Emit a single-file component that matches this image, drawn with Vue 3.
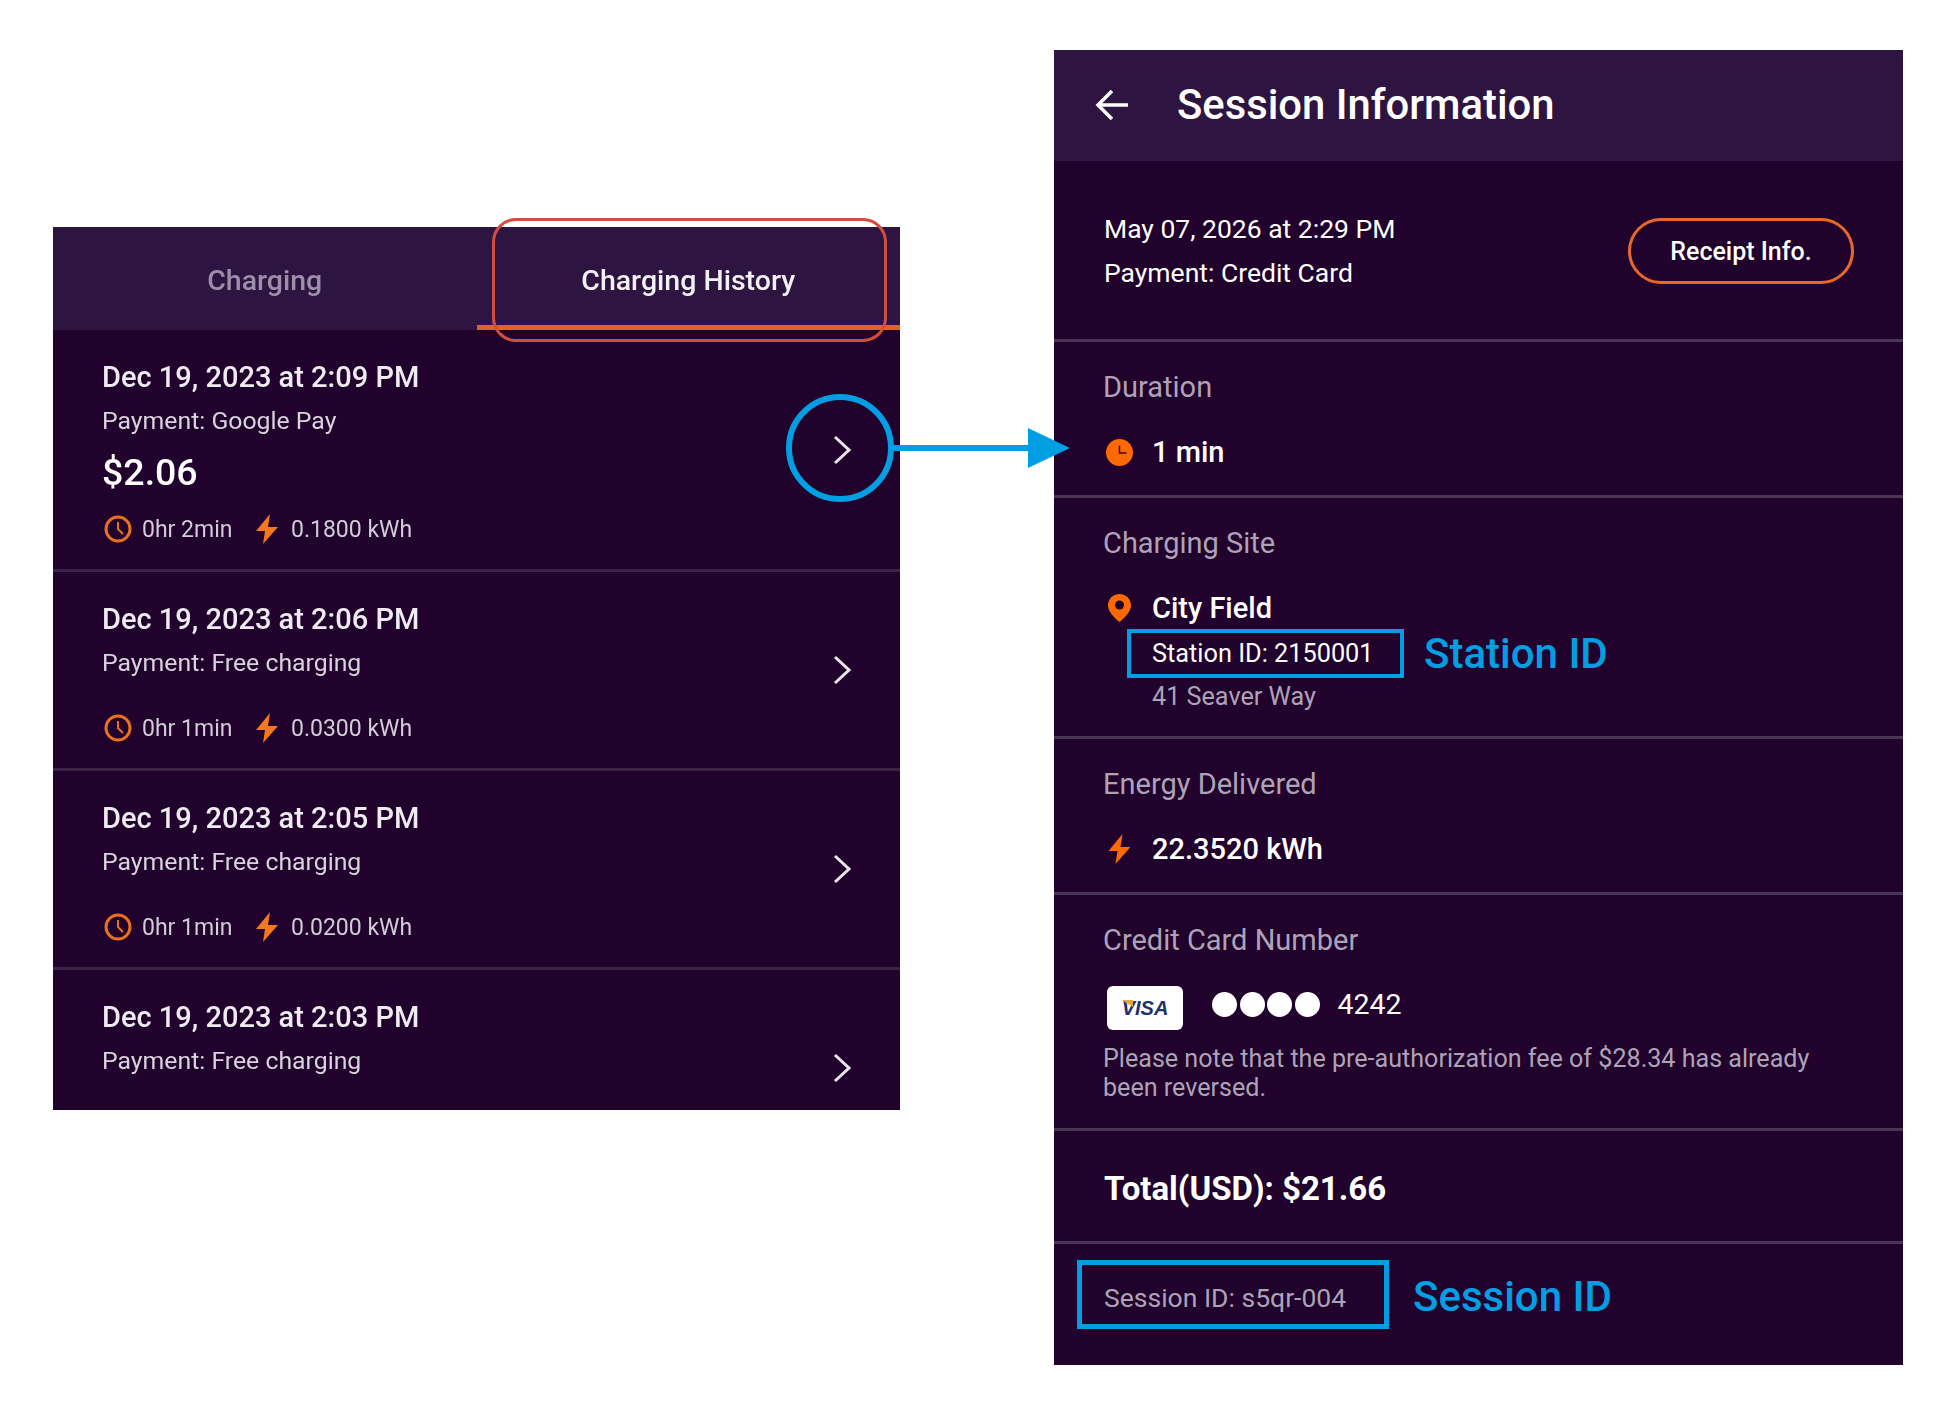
<template>
  <div class="page">
    <!-- history list -->
    <section class="history">
      <div class="tabs">
        <div class="tab">Charging</div>
        <div class="tab active">Charging History</div>
      </div>
      <div class="rows">
        <div v-for="item in sessions" :key="item.date" class="row">
          <div class="row-body">
            <div class="row-date">{{ item.date }}</div>
            <div class="row-pay">Payment: {{ item.payment }}</div>
            <div v-if="item.price" class="row-price">{{ item.price }}</div>
            <div v-if="item.time" class="row-meta">
              <svg class="meta-clock" viewBox="0 0 28 28" fill="none" stroke="#e8701f" stroke-width="3">
                <circle cx="14" cy="14" r="12" />
                <path d="M14 7v7l5 5" stroke-width="2" />
              </svg>
              <span class="meta-time">{{ item.time }}</span>
              <svg class="meta-bolt" viewBox="0 0 22 30"><path :d="boltPath" fill="#f5781a" /></svg>
              <span>{{ item.energy }}</span>
            </div>
          </div>
          <svg class="chevron" viewBox="0 0 19 30" fill="none" stroke="#ebe7ee" stroke-width="3">
            <path d="M2 2l14 13L2 28" />
          </svg>
        </div>
      </div>
      <div class="red-mark"></div>
      <div class="blue-ring"></div>
    </section>

    <!-- session details -->
    <section class="detail">
      <header class="detail-head">
        <svg class="back" viewBox="0 0 33 32" fill="none" stroke="#fff" stroke-width="3.5">
          <path d="M33 16H4M17 2L3 16l14 14" />
        </svg>
        <h1>Session Information</h1>
      </header>

      <div class="block top">
        <div>
          <div class="line">May 07, 2026 at 2:29 PM</div>
          <div class="line second">Payment: Credit Card</div>
        </div>
        <button class="receipt">Receipt Info.</button>
      </div>

      <div class="block">
        <div class="label">Duration</div>
        <div class="value">
          <span class="slot">
            <svg width="27" height="27" viewBox="0 0 27 27">
              <circle cx="13.5" cy="13.5" r="13.5" fill="#ff6a00" />
              <path d="M13.5 6.5v7.5h7" fill="none" stroke="#3a0a20" stroke-width="1.5" />
            </svg>
          </span>
          1 min
        </div>
      </div>

      <div class="block site-block">
        <div class="label">Charging Site</div>
        <div class="value">
          <span class="slot">
            <svg width="23" height="28" viewBox="0 0 23 28">
              <path d="M11.5 0C5 0 0 5 0 11.5 0 18 7 24 11.5 28 16 24 23 18 23 11.5 23 5 18 0 11.5 0z" fill="#ff6a00" />
              <circle cx="11.5" cy="11" r="4.5" fill="#20022d" />
            </svg>
          </span>
          City Field
        </div>
        <div class="station">
          <div class="station-box">Station ID: 2150001</div>
          <div class="callout">Station ID</div>
        </div>
        <div class="address">41 Seaver Way</div>
      </div>

      <div class="block">
        <div class="label">Energy Delivered</div>
        <div class="value">
          <span class="slot">
            <svg width="23" height="30" viewBox="0 0 22 30"><path :d="boltPath" fill="#ff6a00" /></svg>
          </span>
          22.3520 kWh
        </div>
      </div>

      <div class="block card-block">
        <div class="label">Credit Card Number</div>
        <div class="card-row">
          <div class="visa"><span>VISA</span></div>
          <div class="dots"><i v-for="n in 4" :key="n"></i></div>
          <div class="last4">4242</div>
        </div>
        <p class="note">Please note that the pre-authorization fee of $28.34 has already been reversed.</p>
      </div>

      <div class="block total">Total(USD): $21.66</div>

      <div class="session-row">
        <div class="session-box">Session ID: s5qr-004</div>
        <div class="callout">Session ID</div>
      </div>
    </section>

    <svg class="arrow" width="178" height="40" viewBox="0 0 178 40">
      <path d="M0 20h140" stroke="#009fe3" stroke-width="6" />
      <path d="M136 0l42 20-42 20z" fill="#009fe3" />
    </svg>
  </div>
</template>

<script setup>
const boltPath = 'M14 0L0 17h9L7 30 22 13h-10z'

const sessions = [
  { date: 'Dec 19, 2023 at 2:09 PM', payment: 'Google Pay', price: '$2.06', time: '0hr 2min', energy: '0.1800 kWh' },
  { date: 'Dec 19, 2023 at 2:06 PM', payment: 'Free charging', time: '0hr 1min', energy: '0.0300 kWh' },
  { date: 'Dec 19, 2023 at 2:05 PM', payment: 'Free charging', time: '0hr 1min', energy: '0.0200 kWh' },
  { date: 'Dec 19, 2023 at 2:03 PM', payment: 'Free charging' }
]
</script>

<style>
body {
  background: #fff;
}
</style>

<style scoped>
.page {
  position: relative;
  display: flex;
  align-items: flex-start;
  width: 1947px;
  height: 1416px;
  padding-left: 53px;
  box-sizing: border-box;
  overflow: hidden;
  background: #fff;
  font-family: Roboto, "Liberation Sans", sans-serif;
  color: #fff;
}

.history {
  position: relative;
  width: 847px;
  height: 883px;
  margin-top: 227px;
  background: #20022d;
}

.tabs {
  display: flex;
  height: 103px;
  background: #2d1441;
  filter: blur(0.45px);
}

.tab {
  display: flex;
  flex: 1;
  align-items: center;
  justify-content: center;
  padding-top: 4px;
  box-sizing: border-box;
  font-size: 28.5px;
  font-weight: 500;
  color: #9d8eaa;
}

.tab.active {
  padding-top: 9px;
  color: #f4f1f6;
  border-bottom: 5px solid #d9652a;
}

.rows {
  height: 780px;
  overflow: hidden;
  filter: blur(0.45px);
}

.row {
  display: flex;
  align-items: center;
  justify-content: space-between;
  padding: 0 48px 0 49px;
  border-bottom: 3px solid #3b2346;
}

.row-body {
  padding: 32px 0 25px;
}

.row:last-child {
  height: 196px;
  border-bottom: none;
}

.row:last-child .row-body {
  height: 196px;
  box-sizing: border-box;
}

.row-date {
  font-size: 29px;
  font-weight: 500;
  line-height: 30px;
  color: #efebf1;
}

.row-pay {
  margin-top: 14px;
  font-size: 24.8px;
  line-height: 30px;
  color: #d9d3dd;
}

.row-price {
  margin-top: 16px;
  margin-bottom: -13px;
  font-size: 37.5px;
  font-weight: 500;
  line-height: 40px;
}

.row-meta {
  display: flex;
  align-items: center;
  height: 30px;
  margin-top: 35px;
  font-size: 23px;
  color: #d2cbd8;
}

.meta-clock {
  width: 28px;
  height: 28px;
  margin: 0 10px 0 2px;
}

.meta-time {
  width: 104px;
}

.meta-bolt {
  width: 22px;
  height: 30px;
  margin: 0 13px 0 10px;
}

.chevron {
  flex: none;
  width: 19px;
  height: 30px;
}

.red-mark {
  position: absolute;
  top: -9px;
  left: 439px;
  width: 395px;
  height: 124px;
  box-sizing: border-box;
  border: 3.5px solid #cf4f3c;
  border-radius: 24px;
}

.blue-ring {
  position: absolute;
  top: 167px;
  left: 733px;
  width: 108px;
  height: 108px;
  box-sizing: border-box;
  border: 6px solid #009fe3;
  border-radius: 50%;
}

.arrow {
  position: absolute;
  top: 428px;
  left: 892px;
}

.detail {
  width: 849px;
  height: 1315px;
  margin-top: 50px;
  margin-left: 154px;
  background: #20022d;
}

.detail-head {
  display: flex;
  align-items: center;
  height: 111px;
  padding: 0 0 2px 41px;
  box-sizing: border-box;
  background: #2d1441;
}

.back {
  width: 33px;
  height: 32px;
  margin-right: 49px;
}

.detail-head h1 {
  margin: 0;
  font-size: 41.8px;
  font-weight: 500;
}

.block {
  padding: 29px 50px 27px;
  border-bottom: 3px solid #4a3556;
}

.block.top {
  display: flex;
  align-items: center;
  justify-content: space-between;
  padding-top: 52px;
  padding-right: 49px;
  padding-bottom: 50px;
}

.block.site-block {
  padding-bottom: 23px;
}

.line {
  font-size: 26.5px;
  line-height: 32px;
}

.line.second {
  margin-top: 12px;
}

.receipt {
  width: 226px;
  height: 66px;
  border: 3px solid #e8682a;
  border-radius: 33px;
  background: transparent;
  color: #fff;
  font-family: inherit;
  font-size: 25px;
  font-weight: 500;
}

.label {
  margin-left: -1px;
  font-size: 29px;
  line-height: 32px;
  color: #aea3b6;
}

.value {
  display: flex;
  align-items: center;
  height: 32px;
  margin-top: 33px;
  font-size: 29px;
  font-weight: 500;
}

.slot {
  display: flex;
  justify-content: center;
  width: 31px;
  margin-right: 17px;
}

.station {
  display: flex;
  align-items: center;
  height: 49px;
  margin: 5px 0 3px 23px;
}

.station-box {
  display: flex;
  align-items: center;
  width: 277px;
  height: 49px;
  padding-left: 21px;
  box-sizing: border-box;
  border: 4px solid #009fe3;
  font-size: 25.3px;
}

.callout {
  margin-left: 20px;
  font-size: 42px;
  font-weight: 500;
  line-height: 48px;
  color: #009fe3;
}

.address {
  margin-left: 48px;
  font-size: 25.2px;
  line-height: 32px;
  color: #aea3b6;
}

.block.card-block {
  padding-bottom: 26px;
}

.card-row {
  display: flex;
  align-items: center;
  margin-top: 30px;
}

.visa {
  position: relative;
  display: flex;
  align-items: center;
  justify-content: center;
  width: 76px;
  height: 44px;
  margin-left: 3px;
  border-radius: 6px;
  background: #fff;
  color: #1f2f6f;
  font-family: "Liberation Sans", sans-serif;
  font-size: 20px;
  font-style: italic;
  font-weight: 700;
}

.visa::before {
  content: "";
  position: absolute;
  top: 14px;
  left: 15px;
  width: 11px;
  height: 7px;
  background: #e6a83a;
  clip-path: polygon(0 0, 100% 0, 100% 100%);
}

.dots {
  display: flex;
  gap: 2.5px;
  margin: 0 18px 7px 29px;
}

.dots i {
  width: 25px;
  height: 25px;
  border-radius: 50%;
  background: #fff;
}

.last4 {
  margin-bottom: 7px;
  font-size: 28.5px;
}

.note {
  margin: 14px 0 0 -1px;
  font-size: 25.1px;
  line-height: 29px;
  color: #aea3b6;
}

.block.total {
  padding-top: 38px;
  padding-bottom: 32px;
  font-size: 33px;
  font-weight: 700;
  line-height: 40px;
}

.session-row {
  display: flex;
  align-items: center;
  padding: 16px 0 0 23px;
}

.session-box {
  display: flex;
  align-items: center;
  width: 312px;
  height: 69px;
  padding: 5px 0 0 22px;
  box-sizing: border-box;
  border: 5px solid #009fe3;
  font-size: 26.5px;
  color: #aea3b6;
}

.session-row .callout {
  margin: 5px 0 0 24px;
}
</style>
